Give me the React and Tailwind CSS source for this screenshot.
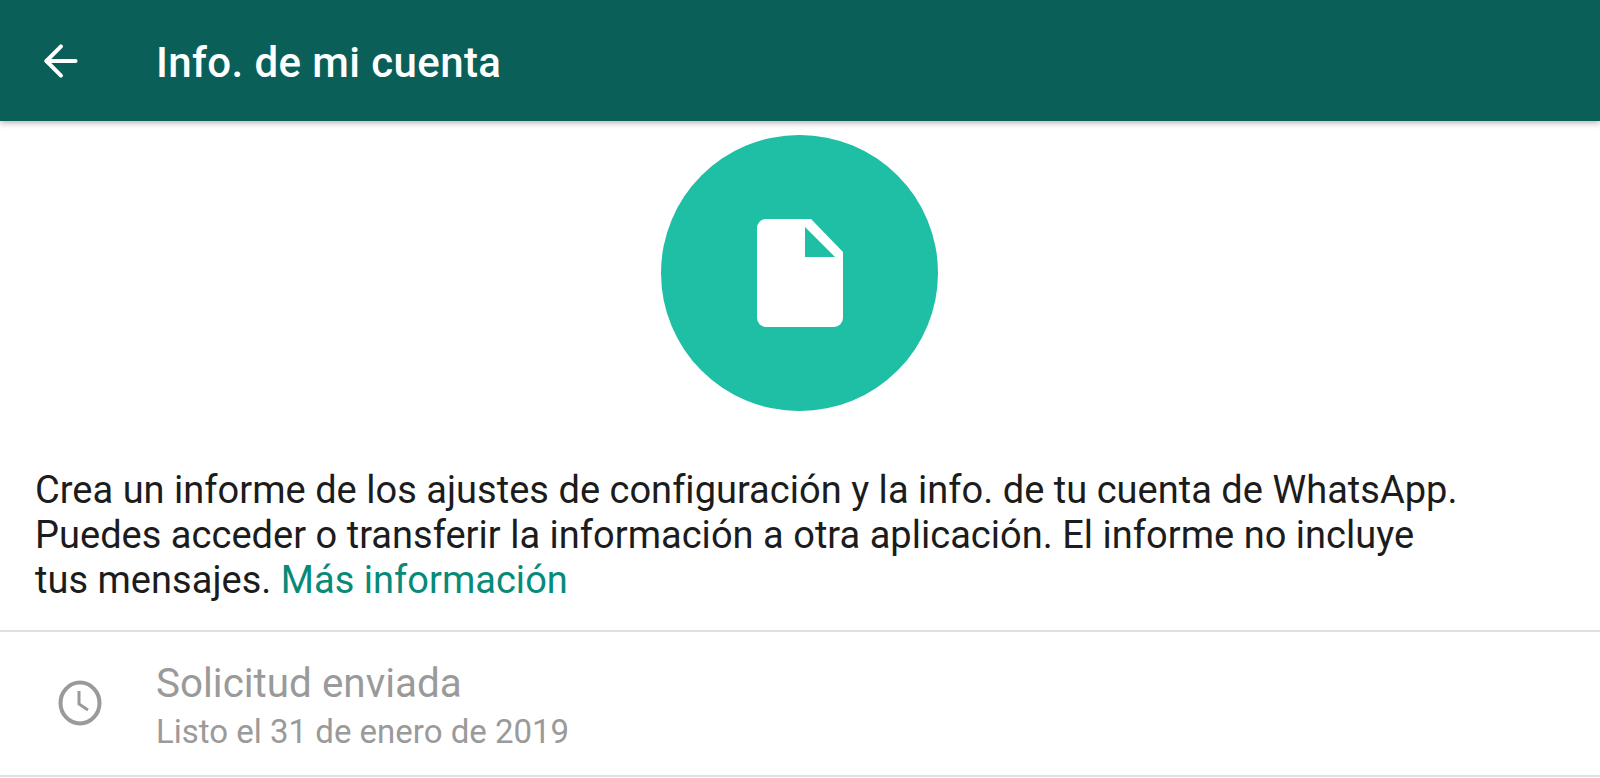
import { ArrowLeft } from "lucide-react";

function FileIcon() {
  return (
    <svg width="86" height="108" viewBox="0 0 86 108">
      <path
        d="M9 0H54L86 33V99a9 9 0 0 1-9 9H9a9 9 0 0 1-9-9V9a9 9 0 0 1 9-9Z"
        fill="#ffffff"
      />
      <path d="M48 8L78 38H48Z" fill="#1fbfa5" />
    </svg>
  );
}

function ClockIcon() {
  return (
    <svg width="44" height="46" viewBox="0 0 44 46" fill="none" stroke="#9a9a9a">
      <ellipse cx="22" cy="23" rx="19.5" ry="20.5" strokeWidth="4" />
      <path d="M21 11V24L30 30" strokeWidth="3" />
    </svg>
  );
}

export default function App() {
  return (
    <div className="w-[1600px] h-[778px] overflow-hidden bg-white font-['Roboto',sans-serif]">
      {/* Header */}
      <header className="relative z-10 flex items-center h-[121px] bg-[#0a6058] shadow-[0_2px_6px_rgba(0,0,0,0.3)]">
        <div className="w-[156px] pl-[36px]">
          <ArrowLeft size={50} color="#ffffff" strokeWidth={1.9} />
        </div>
        <h1 className="pt-[3px] text-[42px] font-medium text-white tracking-[0.4px]">Info. de mi cuenta</h1>
      </header>

      {/* Circle */}
      <div className="flex justify-center pt-[14px] pr-[1px]">
        <div className="flex items-center justify-center w-[277px] h-[276px] rounded-full bg-[#1fbfa5]">
          <FileIcon />
        </div>
      </div>

      {/* Description */}
      <p className="pt-[57px] px-[35px] h-[219px] text-[38px] leading-[45px] tracking-[0.025px] text-[#1c1c1c]">
        Crea un informe de los ajustes de configuración y la info. de tu cuenta de WhatsApp.
        <br />
        Puedes acceder o transferir la información a otra aplicación. El informe no incluye
        <br />
        tus mensajes. <span className="text-[#078a78]">Más información</span>
      </p>

      {/* Request row */}
      <div className="flex items-center h-[147px] border-y-2 border-[#e0e0e0]">
        <div className="flex justify-center w-[156px] pl-[4px] pb-[2px]">
          <ClockIcon />
        </div>
        <div className="pt-[10px]">
          <div className="text-[40.4px] leading-[46px] text-[#9a9a9a]">Solicitud enviada</div>
          <div className="text-[33px] leading-[49px] text-[#9a9a9a]">Listo el 31 de enero de 2019</div>
        </div>
      </div>
    </div>
  );
}
